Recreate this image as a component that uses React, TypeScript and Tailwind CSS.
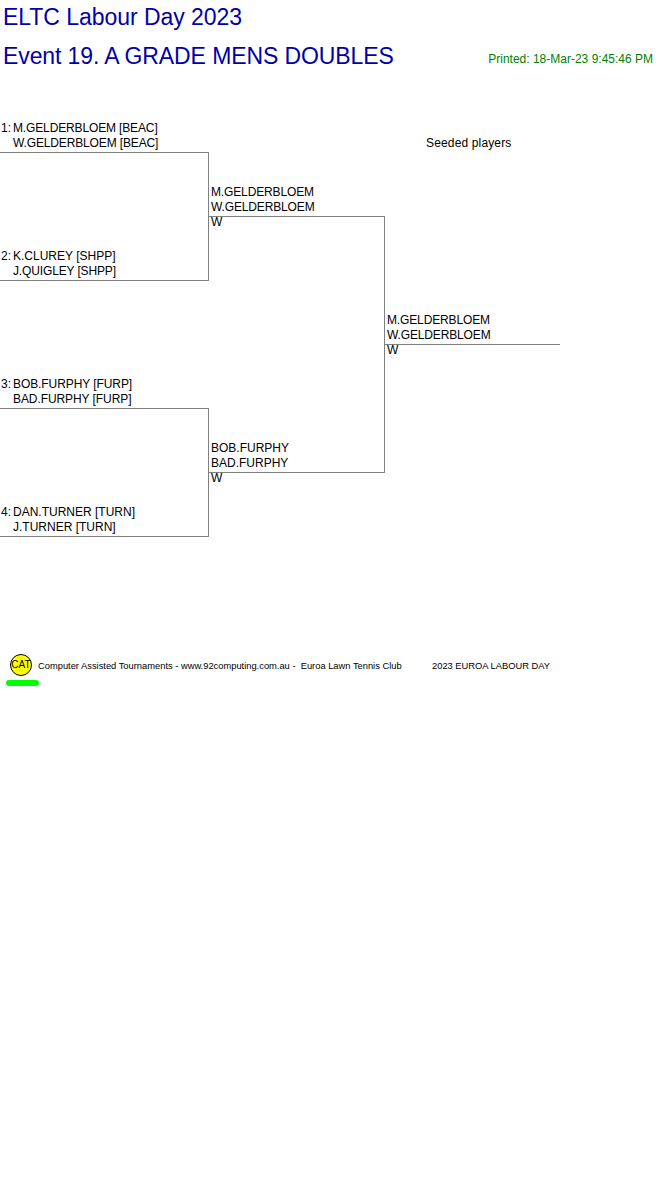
const font = "font-['Liberation_Sans',Arial,sans-serif]";

type Line = { text: string; tracking?: string };

const TIGHT = "tracking-[-0.14px]";
const SLIGHT = "tracking-[-0.08px]";

function Names({ seed, lines }: { seed?: string; lines: Line[] }) {
  return (
    <div className="flex flex-col text-[12px] leading-[15px] text-black">
      {lines.map((l, i) => (
        <div key={l.text} className="flex whitespace-nowrap">
          {seed !== undefined && <span className="w-[13px] pl-px">{i === 0 ? seed : ""}</span>}
          <span className={l.tracking}>{l.text}</span>
        </div>
      ))}
    </div>
  );
}

function FirstRound({ a, b, seedA, seedB }: { a: Line[]; b: Line[]; seedA: string; seedB: string }) {
  return (
    <div className="flex flex-col">
      <Names seed={seedA} lines={a} />
      <div className="mt-px flex h-[129px] flex-col justify-end border-t border-r border-b border-[#808080] pb-[1px]">
        <Names seed={seedB} lines={b} />
      </div>
    </div>
  );
}

function Win() {
  return <div className="pl-[2px] text-[12px] leading-[11px] text-black">W</div>;
}

const gelderbloem: Line[] = [
  { text: "M.GELDERBLOEM", tracking: TIGHT },
  { text: "W.GELDERBLOEM", tracking: TIGHT },
];

export default function App() {
  return (
    <div className={`${font} h-[1196px] w-[661px] overflow-hidden bg-white`}>
      <header className="flex flex-col pl-[3px] pt-[3px] text-[23px] leading-[28px] text-[#0000aa]">
        <div className="tracking-[-0.05px]">ELTC Labour Day 2023</div>
        <div className="mt-[11px] flex items-end justify-between pr-[8px]">
          <span className="tracking-[-0.1px]">Event 19. A GRADE MENS DOUBLES</span>
          <span className="pb-[3px] text-[12px] leading-[16px] text-[#008000]">Printed: 18-Mar-23 9:45:46 PM</span>
        </div>
      </header>

      <main className="mt-[51px] flex items-start">
        <div className="flex w-[209px] shrink-0 flex-col gap-[96px]">
          <FirstRound
            seedA="1:"
            seedB="2:"
            a={[
              { text: "M.GELDERBLOEM [BEAC]", tracking: TIGHT },
              { text: "W.GELDERBLOEM [BEAC]", tracking: TIGHT },
            ]}
            b={[{ text: "K.CLUREY [SHPP]" }, { text: "J.QUIGLEY [SHPP]", tracking: TIGHT }]}
          />
          <FirstRound
            seedA="3:"
            seedB="4:"
            a={[
              { text: "BOB.FURPHY [FURP]", tracking: SLIGHT },
              { text: "BAD.FURPHY [FURP]", tracking: SLIGHT },
            ]}
            b={[{ text: "DAN.TURNER [TURN]" }, { text: "J.TURNER [TURN]" }]}
          />
        </div>

        <div className="flex w-[176px] shrink-0 flex-col pt-[64px]">
          <div className="pl-[2px]">
            <Names lines={gelderbloem} />
          </div>
          <div className="mt-[1px] flex h-[257px] flex-col justify-between border-t border-r border-b border-[#808080]">
            <Win />
            <div className="pb-[1px] pl-[2px]">
              <Names lines={[{ text: "BOB.FURPHY" }, { text: "BAD.FURPHY" }]} />
            </div>
          </div>
          <Win />
        </div>

        <div className="flex w-[175px] shrink-0 flex-col">
          <div className="pl-[41px] pt-[15px] text-[12px] leading-[15px] tracking-[0.15px] text-black">Seeded players</div>
          <div className="mt-[162px] pl-[2px]">
            <Names lines={gelderbloem} />
          </div>
          <div className="mt-[1px] border-t border-[#808080]">
            <Win />
          </div>
        </div>
      </main>

      <footer className="mt-[117px] flex items-start">
        <div className="ml-[6px] flex w-[32px] flex-col">
          <div className="ml-[4px] flex h-[22px] w-[22px] items-center justify-center rounded-full border border-black bg-[#ffff00] text-[10px] leading-none text-black">
            CAT
          </div>
          <div className="mt-[4px] h-[6px] w-[33px] rounded-full bg-[#00ff00]" />
        </div>
        <div className="flex pt-[6px] text-[9.33px] leading-[12px] whitespace-pre text-black">
          <span className="w-[394px]">Computer Assisted Tournaments - www.92computing.com.au -  Euroa Lawn Tennis Club</span>
          <span>2023 EUROA LABOUR DAY</span>
        </div>
      </footer>
    </div>
  );
}
